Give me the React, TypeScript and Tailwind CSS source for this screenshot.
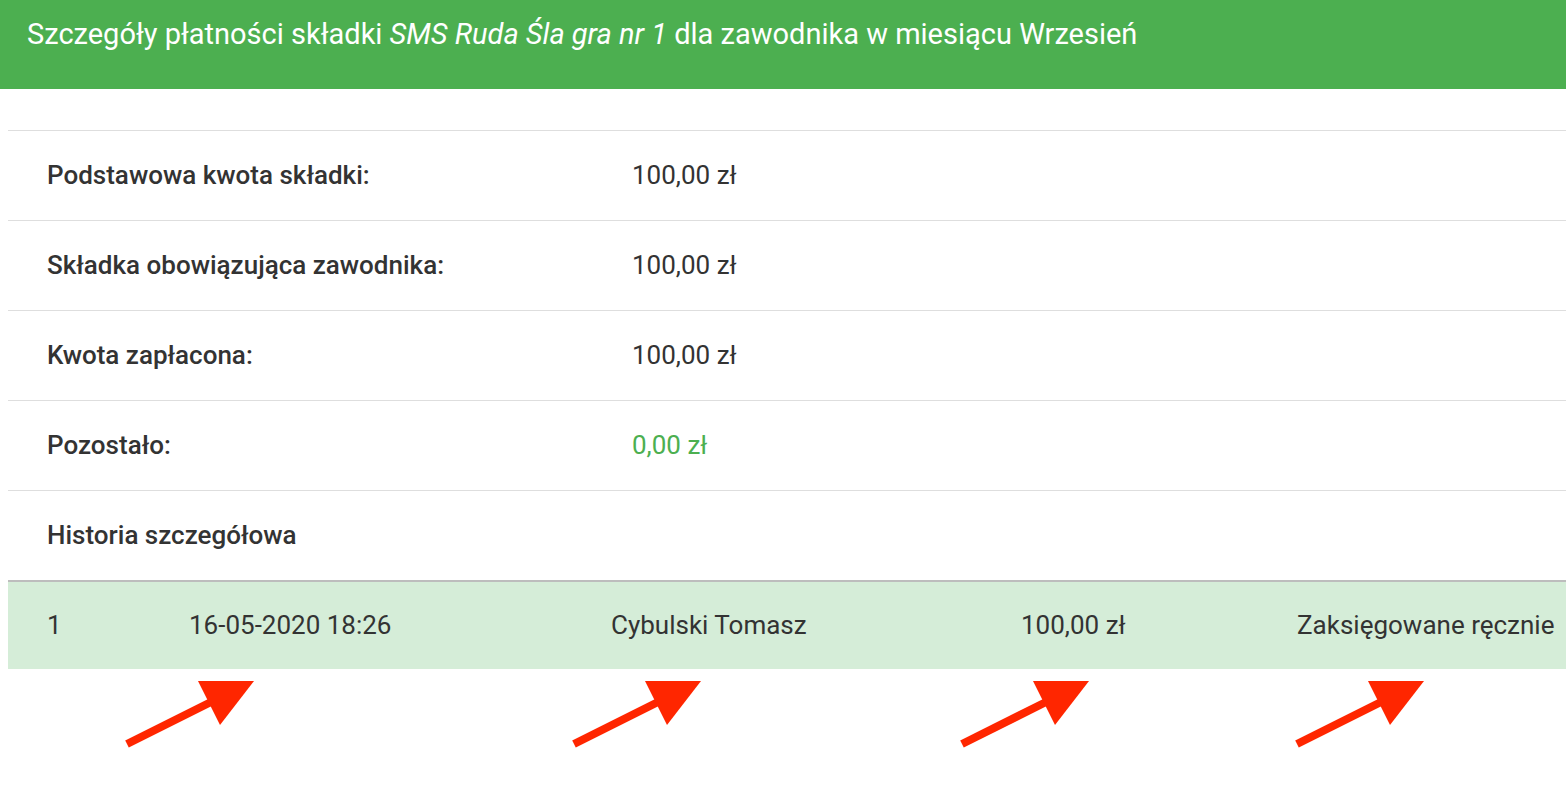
import React from 'react';

const rows = [
  { label: 'Podstawowa kwota składki:', value: '100,00 zł' },
  { label: 'Składka obowiązująca zawodnika:', value: '100,00 zł' },
  { label: 'Kwota zapłacona:', value: '100,00 zł' },
  { label: 'Pozostało:', value: '0,00 zł', green: true },
];

const arrows = [120, 567, 955, 1290];

function Arrow({ left }: { left: number }) {
  return (
    <svg
      className="absolute"
      style={{ left, top: 676 }}
      width="140"
      height="76"
      viewBox="0 0 140 76"
    >
      <line x1="7" y1="68" x2="95" y2="24" stroke="#ff2600" strokeWidth="8" />
      <polygon points="78,5 134,5 100,49" fill="#ff2600" />
    </svg>
  );
}

export default function App() {
  return (
    <div className="relative w-[1566px] h-[810px] bg-white text-[#333] font-['Roboto','Liberation_Sans',sans-serif] overflow-hidden">
      {/* Header */}
      <div className="h-[89px] bg-[#4caf50] px-[27px] pt-[14px] text-white text-[29px] leading-[40px] whitespace-nowrap">
        Szczegóły płatności składki <i>SMS Ruda Śla gra nr 1</i> dla zawodnika w miesiącu Wrzesień
      </div>

      {/* Details table */}
      <div className="ml-[8px] mt-[41px]">
        {rows.map((r, i) => (
          <div key={i} className="h-[90px] border-t border-[#dedede] flex items-center pl-[39px] text-[26px]">
            <div className="w-[585px] font-medium">{r.label}</div>
            <div className={r.green ? 'text-[#4caf50]' : ''}>{r.value}</div>
          </div>
        ))}
        <div className="h-[90px] border-t border-[#dedede] flex items-center pl-[39px] text-[26px] font-medium">
          Historia szczegółowa
        </div>
        <div className="h-[89px] border-t-2 border-[#bdbdbd] bg-[#d5edd8] grid grid-cols-[142px_422px_410px_276px_1fr] items-center pl-[39px] text-[26px] whitespace-nowrap">
          <div>1</div>
          <div>16-05-2020 18:26</div>
          <div>Cybulski Tomasz</div>
          <div>100,00 zł</div>
          <div>Zaksięgowane ręcznie</div>
        </div>
      </div>

      {arrows.map((l) => (
        <Arrow key={l} left={l} />
      ))}
    </div>
  );
}
